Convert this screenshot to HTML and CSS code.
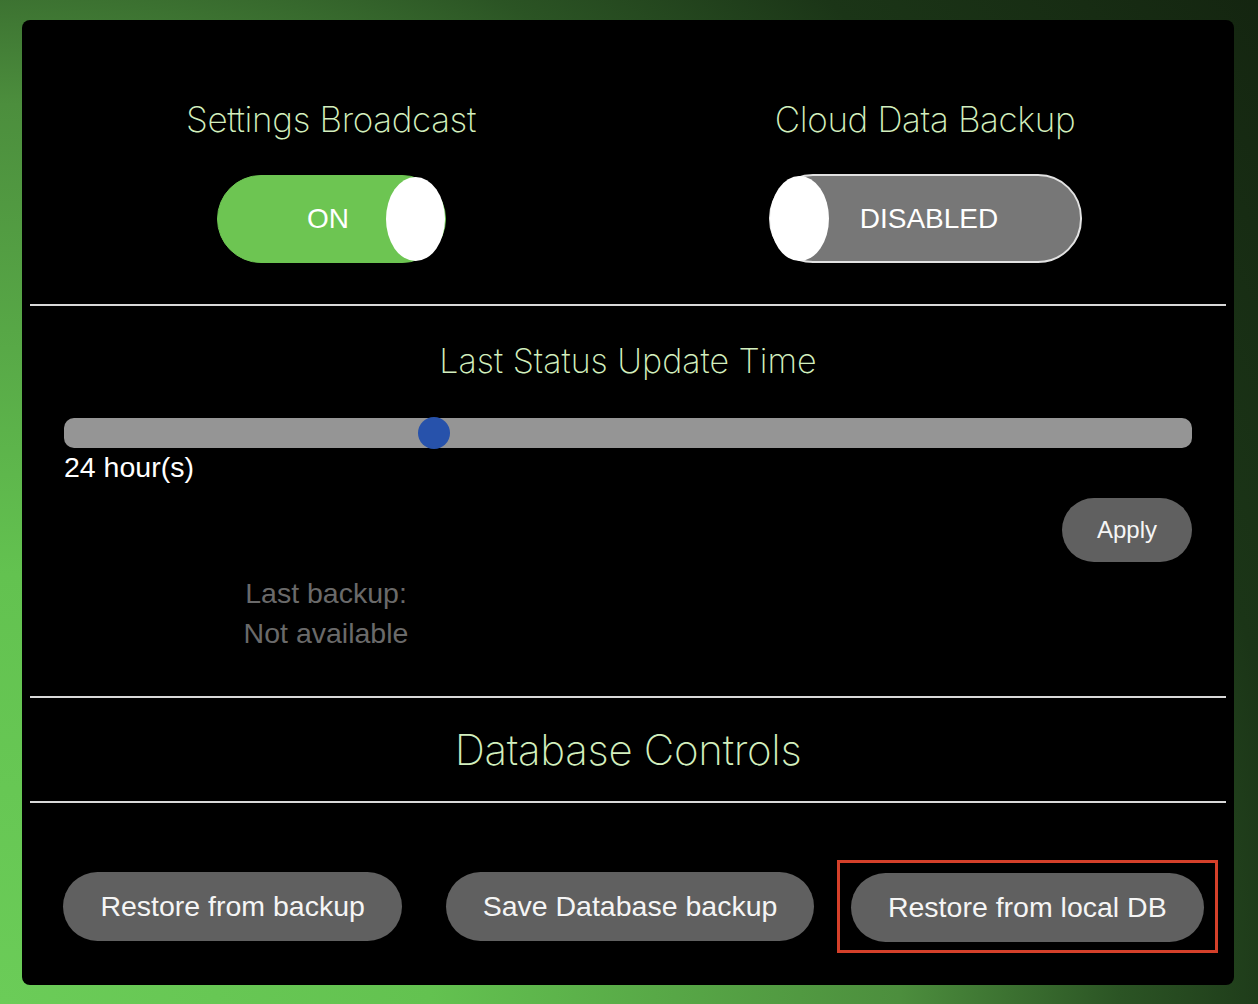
FILE: index.html
```html
<!DOCTYPE html>
<html lang="en">
<head>
<meta charset="utf-8">
<title>Settings</title>
<link rel="stylesheet" href="styles.css">
</head>
<body>
<main class="panel">
  <section class="toggles">
    <div class="toggle-group">
      <h2 class="heading">Settings Broadcast</h2>
      <div class="toggle toggle-on">
        <span class="toggle-label">ON</span>
        <span class="knob knob-right"></span>
      </div>
    </div>
    <div class="toggle-group">
      <h2 class="heading">Cloud Data Backup</h2>
      <div class="toggle toggle-off">
        <span class="knob knob-left"></span>
        <span class="toggle-label">DISABLED</span>
      </div>
    </div>
  </section>

  <hr class="divider">

  <section class="status">
    <h2 class="heading heading-status">Last Status Update Time</h2>
    <div class="slider">
      <div class="slider-track"></div>
      <div class="slider-thumb" style="left: 32.8%"></div>
    </div>
    <div class="slider-value">24 hour(s)</div>
    <div class="apply-row">
      <button class="btn btn-apply">Apply</button>
    </div>
    <div class="backup-info">
      <div class="backup-text">Last backup:<br>Not available</div>
    </div>
  </section>

  <hr class="divider divider-db">

  <h2 class="heading heading-db">Database Controls</h2>

  <hr class="divider divider-db-bottom">

  <section class="actions">
    <div class="action-cell">
      <button class="btn btn-action">Restore from backup</button>
    </div>
    <div class="action-cell">
      <button class="btn btn-action">Save Database backup</button>
    </div>
    <div class="action-cell">
      <div class="highlight">
        <button class="btn btn-action">Restore from local DB</button>
      </div>
    </div>
  </section>
</main>
</body>
</html>
```

FILE: styles.css
```css
html, body {
  margin: 0;
  padding: 0;
}

body {
  min-height: 1004px;
  background: radial-gradient(circle at 0% 100%, #6bcc58 0px, #63c250 430px, #4c8e3d 900px, #2b5424 1120px, #1b3517 1300px, #13230f 1650px);
  font-family: "Liberation Sans", Arial, sans-serif;
  overflow: hidden;
}

.panel {
  box-sizing: border-box;
  width: 1212px;
  margin: 20px 0 0 22px;
  padding: 79px 8px 32px;
  background: #000;
  border-radius: 8px;
}

.heading {
  margin: 0;
  font-family: Inter, "Noto Sans", sans-serif;
  font-weight: 200;
  font-size: 35px;
  line-height: 40px;
  color: #d3efbe;
  text-align: center;
  letter-spacing: -0.35px;
}

.toggles {
  display: grid;
  grid-template-columns: 1fr 1fr;
  padding: 0 4px;
}

.toggle-group {
  display: flex;
  flex-direction: column;
  align-items: center;
}

.toggle {
  position: relative;
  box-sizing: border-box;
  height: 88px;
  margin-top: 36px;
  border-radius: 44px;
  display: flex;
  align-items: center;
  justify-content: center;
  color: #fff;
  font-size: 28px;
}

.toggle-on {
  width: 229px;
  background: #6dc552;
  border: 1px solid #6dc552;
  padding-right: 6px;
}

.toggle-off {
  width: 313px;
  height: 89px;
  margin-top: 35px;
  background: #777777;
  border: 2px solid #e2e2e2;
  padding-left: 8px;
}

.knob {
  position: absolute;
  top: 1px;
  width: 59px;
  height: 84px;
  background: #fff;
  border-radius: 50%;
}

.knob-right {
  right: 0;
}

.knob-left {
  left: -1px;
  top: 0;
  height: 85px;
}

.divider {
  margin: 0;
  border: 0;
  height: 2px;
  background: #d9d9d9;
}

.toggles + .divider {
  margin-top: 41px;
}

.status {
  padding: 0 34px;
}

.heading-status {
  margin-top: 35px;
  font-size: 34px;
  letter-spacing: 0;
}

.slider {
  position: relative;
  margin-top: 37px;
  height: 30px;
}

.slider-track {
  height: 30px;
  border-radius: 10px;
  background: #959595;
}

.slider-thumb {
  position: absolute;
  top: -1px;
  width: 32px;
  height: 32px;
  margin-left: -16px;
  border-radius: 50%;
  background: #2752ab;
}

.slider-value {
  margin-top: 3px;
  font-size: 28.5px;
  line-height: 32px;
  color: #fff;
}

.apply-row {
  display: flex;
  justify-content: flex-end;
  margin-top: 15px;
}

.btn {
  border: 0;
  margin: 0;
  font-family: "Liberation Sans", Arial, sans-serif;
  color: #f5f5f5;
  background: #606060;
  cursor: pointer;
}

.btn-apply {
  height: 64px;
  padding: 0 35px;
  border-radius: 32px;
  font-size: 24px;
}

.backup-info {
  display: grid;
  grid-template-columns: 1fr 1fr;
  margin: 11px -34px 0;
}

.backup-text {
  text-align: center;
  font-size: 28.5px;
  line-height: 40px;
  color: #6a6a6a;
  padding-right: 6px;
}

.divider-db {
  margin-top: 43px;
}

.heading-db {
  margin-top: 27px;
  font-size: 42px;
  line-height: 50px;
  letter-spacing: -0.3px;
}

.divider-db-bottom {
  margin-top: 26px;
}

.actions {
  display: grid;
  grid-template-columns: 1fr 1fr 1fr;
  align-items: center;
  margin-top: 57px;
  padding-left: 4px;
}

.action-cell {
  display: flex;
  justify-content: center;
}

.btn-action {
  height: 69px;
  padding: 0 37px;
  border-radius: 35px;
  font-size: 28.5px;
  white-space: nowrap;
}

.highlight {
  border: 3px solid #d4402a;
  padding: 10px 11px 8px;
}
```
